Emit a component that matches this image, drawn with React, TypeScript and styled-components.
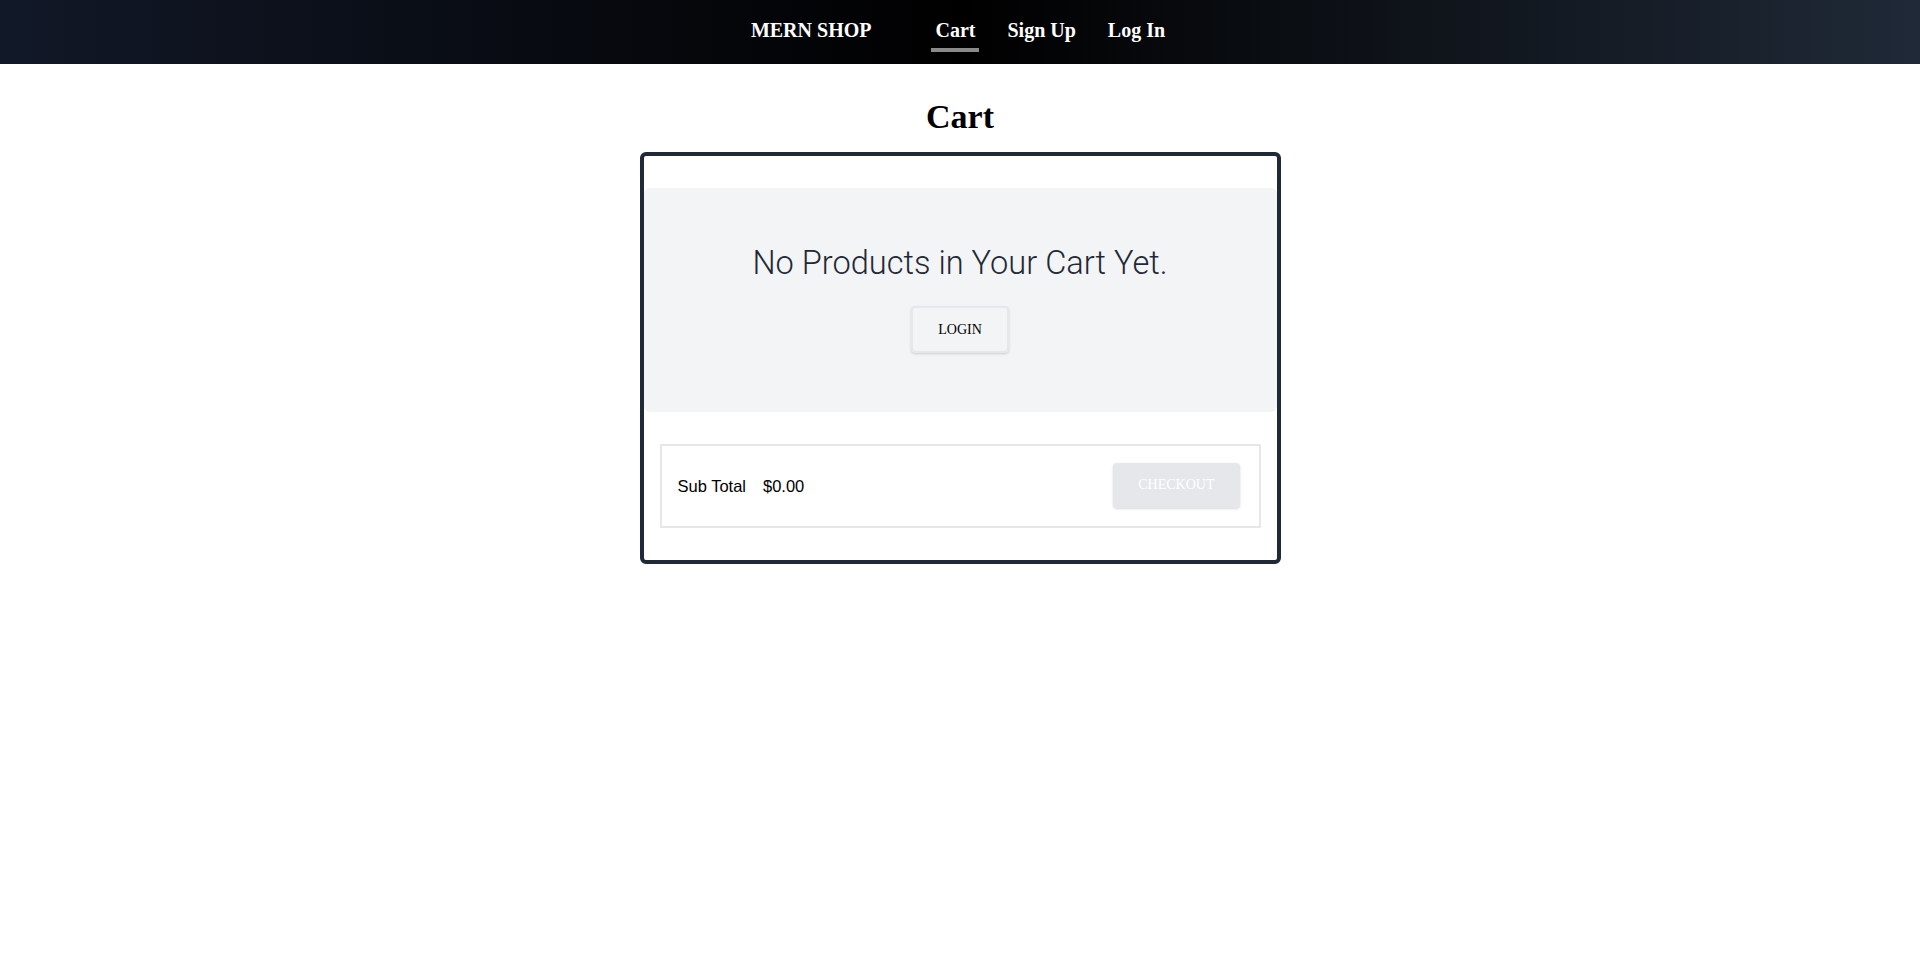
import React from "react";
import styled, { createGlobalStyle } from "styled-components";

const Global = createGlobalStyle`
  html, body { margin: 0; padding: 0; background: #ffffff; }
  body { font-family: "Liberation Serif", "Times New Roman", serif; color: #000; }
  * { box-sizing: border-box; }
`;

const NavBar = styled.nav`
  height: 64px;
  background: linear-gradient(to right, #111827, #000000, #1f2937);
  display: flex;
  justify-content: center;
  align-items: flex-start;
  padding-top: 16px;
`;

const Brand = styled.a`
  font-family: "Liberation Serif", "Times New Roman", serif;
  font-weight: 700;
  font-size: 20px;
  line-height: 28px;
  color: #ffffff;
  text-decoration: none;
  margin-right: 60px;
`;

const Links = styled.div`
  display: flex;
  gap: 24px;
`;

const NavLink = styled.a<{ $active?: boolean }>`
  font-family: "Liberation Serif", "Times New Roman", serif;
  font-weight: 700;
  font-size: 20px;
  line-height: 28px;
  color: #ffffff;
  text-decoration: none;
  padding: 0 4px 4px;
  border-bottom: 4px solid ${(p) => (p.$active ? "#8a8a8a" : "transparent")};
`;

const Main = styled.main`
  display: flex;
  flex-direction: column;
  align-items: center;
`;

const Title = styled.h1`
  font-family: "Liberation Serif", "Times New Roman", serif;
  font-weight: 700;
  font-size: 34px;
  line-height: 40px;
  margin: 33px 0 15px;
`;

const Card = styled.section`
  width: 641px;
  border: 4px solid #1f2937;
  border-radius: 6px;
  padding: 32px 0;
  background: #fff;
`;

const EmptyPanel = styled.div`
  background: #f3f4f6;
  border-radius: 6px;
  height: 224px;
  display: flex;
  flex-direction: column;
  align-items: center;
  padding-top: 55px;
`;

const EmptyText = styled.h2`
  font-family: Roboto, "Liberation Sans", sans-serif;
  font-weight: 300;
  font-size: 32.6px;
  line-height: 40px;
  color: #1f2937;
  margin: 0 0 23px;
`;

const Button = styled.button<{ $disabled?: boolean }>`
  font-family: "Liberation Serif", "Times New Roman", serif;
  font-size: 14px;
  font-weight: 400;
  height: ${(p) => (p.$disabled ? "45px" : "47px")};
  padding: 0 ${(p) => (p.$disabled ? "23px" : "25px")};
  border-radius: 4px;
  border: 2px solid #e5e7eb;
  background: ${(p) => (p.$disabled ? "#e5e7eb" : "#f3f4f6")};
  color: ${(p) => (p.$disabled ? "#ffffff" : "#000000")};
  box-shadow: 0 1px 3px rgba(0, 0, 0, 0.1), 0 1px 2px rgba(0, 0, 0, 0.06);
  cursor: ${(p) => (p.$disabled ? "default" : "pointer")};
`;

const SummaryBox = styled.div`
  margin: 32px 16px 0;
  height: 84px;
  border: 2px solid #e5e7eb;
  display: flex;
  align-items: center;
  justify-content: space-between;
  padding: 0 19px 2px 16px;
`;

const Totals = styled.div`
  display: flex;
  gap: 17px;
  font-family: "Liberation Sans", Arial, sans-serif;
  font-size: 16.5px;
  color: #000;
  padding-top: 2px;
`;

export default function App() {
  return (
    <>
      <Global />
      <NavBar>
        <Brand href="#">MERN SHOP</Brand>
        <Links>
          <NavLink href="#" $active>
            Cart
          </NavLink>
          <NavLink href="#">Sign Up</NavLink>
          <NavLink href="#">Log In</NavLink>
        </Links>
      </NavBar>
      <Main>
        <Title>Cart</Title>
        <Card>
          <EmptyPanel>
            <EmptyText>No Products in Your Cart Yet.</EmptyText>
            <Button>LOGIN</Button>
          </EmptyPanel>
          <SummaryBox>
            <Totals>
              <span>Sub Total</span>
              <span>$0.00</span>
            </Totals>
            <Button $disabled disabled>
              CHECKOUT
            </Button>
          </SummaryBox>
        </Card>
      </Main>
    </>
  );
}
